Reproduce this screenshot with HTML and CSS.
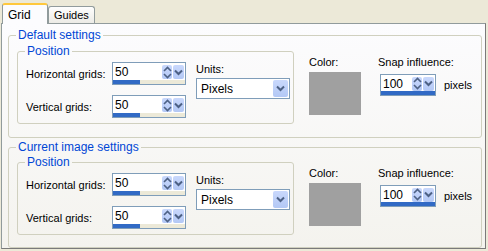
FILE: index.html
```html
<!DOCTYPE html>
<html lang="en">
<head>
  <meta charset="UTF-8">
  <title>Grid and Guides</title>
  <link rel="stylesheet" href="styles.css">
</head>
<body>
  <div class="dialog">
    <div class="tabs">
      <div class="tab active">Grid</div>
      <div class="tab">Guides</div>
    </div>

    <div class="panel">
      <fieldset class="group">
        <legend>Default settings</legend>
        <div class="group-body">
          <fieldset class="group inner">
            <legend>Position</legend>
            <div class="position">
              <div class="fields">
                <div class="row">
                  <label>Horizontal grids:</label>
                  <div class="spin wide">
                    <div class="spin-field">
                      <span class="val">50</span>
                      <span class="btn updown"><svg width="9" height="13" viewBox="0 0 9 13"><path d="M1 5 L4.5 1.5 L8 5 M1 8 L4.5 11.5 L8 8" fill="none" stroke="#4d6185" stroke-width="1.6"/></svg></span>
                      <span class="btn drop"><svg width="9" height="7" viewBox="0 0 9 7"><path d="M1 1.5 L4.5 5 L8 1.5" fill="none" stroke="#4d6185" stroke-width="2"/></svg></span>
                    </div>
                    <div class="bar"><div class="fill" style="width:37%"></div></div>
                  </div>
                </div>
                <div class="row">
                  <label>Vertical grids:</label>
                  <div class="spin wide">
                    <div class="spin-field">
                      <span class="val">50</span>
                      <span class="btn updown"><svg width="9" height="13" viewBox="0 0 9 13"><path d="M1 5 L4.5 1.5 L8 5 M1 8 L4.5 11.5 L8 8" fill="none" stroke="#4d6185" stroke-width="1.6"/></svg></span>
                      <span class="btn drop"><svg width="9" height="7" viewBox="0 0 9 7"><path d="M1 1.5 L4.5 5 L8 1.5" fill="none" stroke="#4d6185" stroke-width="2"/></svg></span>
                    </div>
                    <div class="bar"><div class="fill" style="width:37%"></div></div>
                  </div>
                </div>
              </div>
              <div class="units">
                <label>Units:</label>
                <div class="select">
                  <span class="val">Pixels</span>
                  <span class="btn sel-drop"><svg width="9" height="7" viewBox="0 0 9 7"><path d="M1 1.5 L4.5 5 L8 1.5" fill="none" stroke="#4d6185" stroke-width="2"/></svg></span>
                </div>
              </div>
            </div>
          </fieldset>
          <div class="color">
            <label>Color:</label>
            <div class="swatch"></div>
          </div>
          <div class="snap">
            <label>Snap influence:</label>
            <div class="snap-row">
              <div class="spin narrow">
                <div class="spin-field">
                  <span class="val">100</span>
                  <span class="btn updown"><svg width="9" height="13" viewBox="0 0 9 13"><path d="M1 5 L4.5 1.5 L8 5 M1 8 L4.5 11.5 L8 8" fill="none" stroke="#4d6185" stroke-width="1.6"/></svg></span>
                  <span class="btn drop"><svg width="9" height="7" viewBox="0 0 9 7"><path d="M1 1.5 L4.5 5 L8 1.5" fill="none" stroke="#4d6185" stroke-width="2"/></svg></span>
                </div>
                <div class="bar"><div class="fill" style="width:100%"></div></div>
              </div>
              <span class="unit">pixels</span>
            </div>
          </div>
        </div>
      </fieldset>

      <fieldset class="group second">
        <legend>Current image settings</legend>
        <div class="group-body">
          <fieldset class="group inner">
            <legend>Position</legend>
            <div class="position">
              <div class="fields">
                <div class="row">
                  <label>Horizontal grids:</label>
                  <div class="spin wide">
                    <div class="spin-field">
                      <span class="val">50</span>
                      <span class="btn updown"><svg width="9" height="13" viewBox="0 0 9 13"><path d="M1 5 L4.5 1.5 L8 5 M1 8 L4.5 11.5 L8 8" fill="none" stroke="#4d6185" stroke-width="1.6"/></svg></span>
                      <span class="btn drop"><svg width="9" height="7" viewBox="0 0 9 7"><path d="M1 1.5 L4.5 5 L8 1.5" fill="none" stroke="#4d6185" stroke-width="2"/></svg></span>
                    </div>
                    <div class="bar"><div class="fill" style="width:37%"></div></div>
                  </div>
                </div>
                <div class="row">
                  <label>Vertical grids:</label>
                  <div class="spin wide">
                    <div class="spin-field">
                      <span class="val">50</span>
                      <span class="btn updown"><svg width="9" height="13" viewBox="0 0 9 13"><path d="M1 5 L4.5 1.5 L8 5 M1 8 L4.5 11.5 L8 8" fill="none" stroke="#4d6185" stroke-width="1.6"/></svg></span>
                      <span class="btn drop"><svg width="9" height="7" viewBox="0 0 9 7"><path d="M1 1.5 L4.5 5 L8 1.5" fill="none" stroke="#4d6185" stroke-width="2"/></svg></span>
                    </div>
                    <div class="bar"><div class="fill" style="width:37%"></div></div>
                  </div>
                </div>
              </div>
              <div class="units">
                <label>Units:</label>
                <div class="select">
                  <span class="val">Pixels</span>
                  <span class="btn sel-drop"><svg width="9" height="7" viewBox="0 0 9 7"><path d="M1 1.5 L4.5 5 L8 1.5" fill="none" stroke="#4d6185" stroke-width="2"/></svg></span>
                </div>
              </div>
            </div>
          </fieldset>
          <div class="color">
            <label>Color:</label>
            <div class="swatch"></div>
          </div>
          <div class="snap">
            <label>Snap influence:</label>
            <div class="snap-row">
              <div class="spin narrow">
                <div class="spin-field">
                  <span class="val">100</span>
                  <span class="btn updown"><svg width="9" height="13" viewBox="0 0 9 13"><path d="M1 5 L4.5 1.5 L8 5 M1 8 L4.5 11.5 L8 8" fill="none" stroke="#4d6185" stroke-width="1.6"/></svg></span>
                  <span class="btn drop"><svg width="9" height="7" viewBox="0 0 9 7"><path d="M1 1.5 L4.5 5 L8 1.5" fill="none" stroke="#4d6185" stroke-width="2"/></svg></span>
                </div>
                <div class="bar"><div class="fill" style="width:100%"></div></div>
              </div>
              <span class="unit">pixels</span>
            </div>
          </div>
        </div>
      </fieldset>
    </div>
  </div>
</body>
</html>
```

FILE: styles.css
```css
body {
  margin: 0;
  background: #ece9d8;
  font-family: "Liberation Sans", Arial, sans-serif;
  font-size: 11px;
  color: #000;
}
.dialog {
  width: 488px;
  height: 251px;
  overflow: hidden;
}
.tabs {
  display: flex;
  align-items: flex-end;
  height: 23px;
  padding-left: 2px;
  position: relative;
  z-index: 1;
}
.tab {
  height: 16px;
  line-height: 16px;
  padding: 0 5px;
  border: 1px solid #919b9c;
  border-bottom: none;
  border-radius: 3px 3px 0 0;
  background: linear-gradient(#fefefe, #ecebe6);
}
.tab.active {
  height: 19px;
  line-height: 20px;
  width: 34px;
  border-top: 2px solid #ffc83c;
  background: #fcfcfe;
  margin-bottom: -1px;
  font-size: 12px;
}
.panel {
  margin-left: 1px;
  width: 485px;
  height: 226px;
  border: 1px solid #919b9c;
  border-right-color: #7a7a7a;
  border-bottom-color: #7a7a7a;
  background: linear-gradient(#fcfcfe, #f4f3ee);
  padding: 5px 0 0 6px;
  box-sizing: border-box;
}
.group {
  margin: 0;
  padding: 0;
  width: 474px;
  height: 109px;
  box-sizing: border-box;
  border: 1px solid #d0d0bf;
  border-radius: 3px;
}
.group legend {
  margin-left: 7px;
  padding: 0 2px;
  color: #0046d5;
  font-size: 12px;
  line-height: 13px;
}
.group.second {
  margin-top: 3px;
  height: 107px;
}
.group-body {
  display: flex;
  padding: 3px 0 0 8px;
}
.group.inner {
  width: 277px;
  height: 79px;
}
.second .group-body {
  padding-top: 2px;
}
.position {
  display: flex;
  padding: 4px 0 0 8px;
}
.fields {
  display: flex;
  flex-direction: column;
  gap: 10px;
}
.row {
  display: flex;
  align-items: center;
  height: 23px;
}
.row label {
  width: 86px;
  white-space: nowrap;
}
.spin {
  border: 1px solid #7f9db9;
  background: #fff;
  box-sizing: border-box;
  height: 23px;
  display: flex;
  flex-direction: column;
}
.spin.wide { width: 74px; }
.spin.narrow { width: 56px; height: 22px; }
.spin-field {
  flex: 1;
  display: flex;
  align-items: center;
  padding: 1px 1px 0 2px;
}
.val {
  flex: 1;
  font-size: 12px;
}
.btn {
  display: flex;
  align-items: center;
  justify-content: center;
  background: linear-gradient(#c9d8fc, #b3c8f5);
  border-radius: 2px;
}
.updown {
  width: 10px;
  height: 14px;
  margin-right: 1px;
}
.drop {
  width: 11px;
  height: 14px;
}
.bar {
  height: 4px;
  background: #ece9d8;
}
.fill {
  height: 100%;
  background: #316ac5;
}
.units {
  margin-left: 10px;
  display: flex;
  flex-direction: column;
}
.units label {
  margin-top: 1px;
  height: 15px;
}
.select {
  width: 94px;
  height: 21px;
  border: 1px solid #7f9db9;
  background: #fff;
  box-sizing: border-box;
  display: flex;
  align-items: center;
  padding: 0 1px 0 4px;
}
.sel-drop {
  width: 15px;
  height: 17px;
}
.color {
  margin-left: 15px;
  padding-top: 9px;
  display: flex;
  flex-direction: column;
}
.color label,
.snap label {
  height: 14px;
  margin-top: 2px;
}
.swatch {
  width: 52px;
  height: 43px;
  margin-top: 2px;
  background: #a0a0a0;
}
.snap {
  margin-left: 17px;
  padding-top: 9px;
  display: flex;
  flex-direction: column;
}
.snap-row {
  display: flex;
  align-items: center;
  margin-top: 4px;
  margin-left: 2px;
}
.unit {
  margin-left: 8px;
}
```
